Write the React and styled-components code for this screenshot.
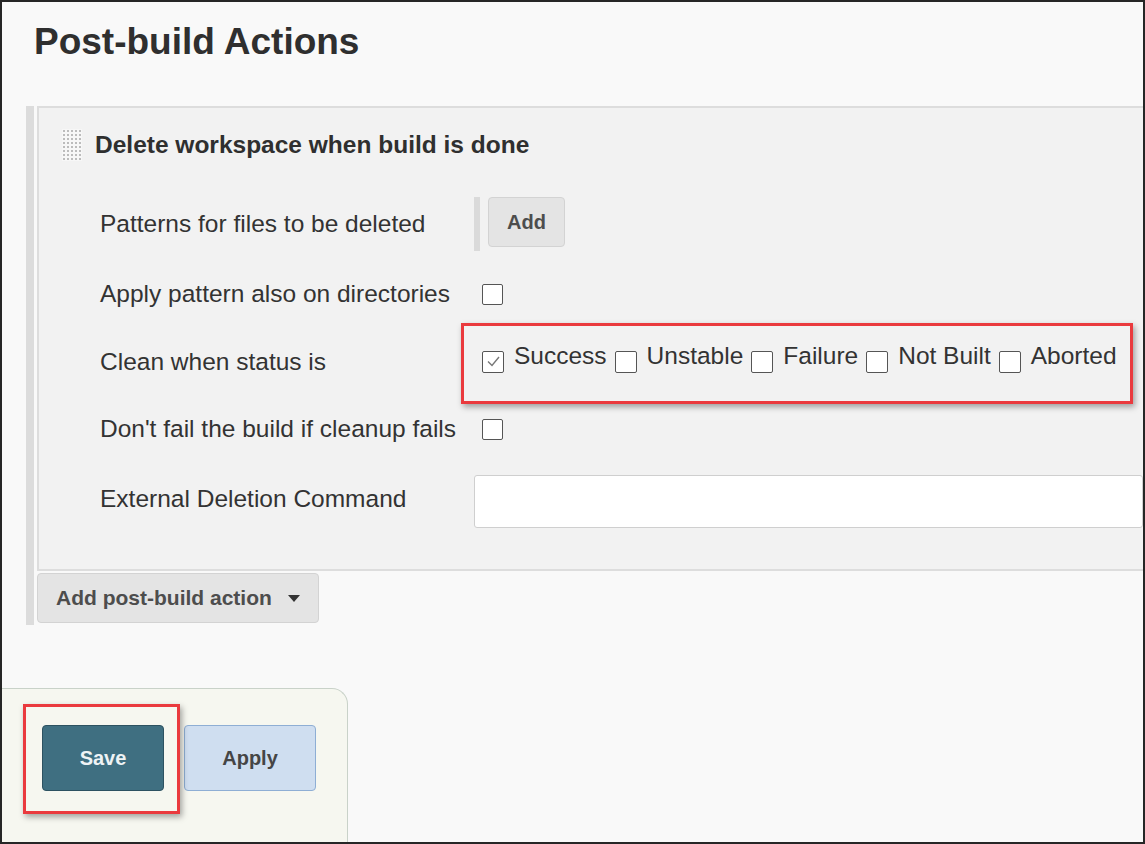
import React from "react";
import styled, { createGlobalStyle } from "styled-components";

const GlobalStyle = createGlobalStyle`
  * { box-sizing: border-box; }
  body {
    margin: 0;
    background: #ffffff;
    font-family: "Liberation Sans", Arial, sans-serif;
  }
`;

const FONT = `"Liberation Sans", Arial, sans-serif`;

const Frame = styled.div`
  width: 1145px;
  height: 844px;
  border: 2px solid #262626;
  background: #f9f9f9;
  overflow: hidden;
  display: flex;
  flex-direction: column;
  font-family: ${FONT};
  color: #333;
`;

const Title = styled.h1`
  margin: 19px 0 0 32px;
  font-size: 37px;
  line-height: 42px;
  font-weight: bold;
  color: #2f2f2f;
`;

const Section = styled.div`
  margin: 43px 0 0 24px;
  border-left: 8px solid #dcdcdc;
  padding: 0 0 2px 3px;
  display: flex;
  flex-direction: column;
  align-items: flex-start;
`;

const Panel = styled.div`
  align-self: stretch;
  background: #f2f2f2;
  border-top: 2px solid #dddddd;
  border-left: 2px solid #dddddd;
  border-bottom: 2px solid #dddddd;
  padding: 22px 0 34px 0;
`;

const PanelHeading = styled.div`
  display: flex;
  align-items: center;
  gap: 13px;
  padding-left: 23px;
  height: 30px;
  font-size: 24.5px;
  font-weight: bold;
  color: #2f2f2f;
`;

const Rows = styled.div`
  margin-top: 29px;
  padding-left: 61px;
  display: grid;
  grid-template-columns: 374px 1fr;
  grid-template-rows: 70px 70px 66px 68px 72px;
  align-items: center;
`;

const Label = styled.div`
  font-size: 24.5px;
  color: #333;
  white-space: nowrap;
`;

const Control = styled.div`
  display: flex;
  align-items: ${(p) => (p.$top ? "flex-start" : "center")};
  gap: ${(p) => p.$gap || 0}px;
  padding-left: ${(p) => p.$indent || 0}px;
`;

const RepeatBar = styled.div`
  width: 6px;
  height: 54px;
  background: #dadada;
`;

const GreyButton = styled.button`
  font-family: ${FONT};
  font-weight: bold;
  font-size: ${(p) => p.$size || 20}px;
  color: #4d4d4d;
  background: #e4e4e4;
  border: 1px solid #d3d3d3;
  border-radius: 4px;
  height: ${(p) => p.$h || 50}px;
  padding: 0 ${(p) => p.$pad || 18}px;
  display: inline-flex;
  align-items: center;
  gap: 16px;
`;

const Box = styled.span`
  display: inline-flex;
  align-items: center;
  justify-content: center;
  width: ${(p) => p.$s || 21}px;
  height: ${(p) => p.$s || 21}px;
  flex: none;
  background: #fff;
  border: 1.5px solid #555;
  border-radius: 2px;
  margin-top: ${(p) => p.$dy || 0}px;
`;

const StatusGroup = styled.div`
  position: relative;
  justify-self: start;
  display: flex;
  align-items: center;
  height: 40px;
  margin-bottom: 12px;
  padding-left: 8px;

  &::after {
    content: "";
    position: absolute;
    left: -13px;
    right: -16px;
    top: -13px;
    bottom: -28px;
    border: 3px solid #ea3a3e;
    box-shadow: 2px 3px 6px rgba(0, 0, 0, 0.35);
    pointer-events: none;
  }
`;

const StatusItem = styled.label`
  display: flex;
  align-items: center;
  margin-right: 8px;
  font-size: 24.5px;
  color: #333;
  white-space: nowrap;

  &:last-child {
    margin-right: 0;
  }

  span + span {
    margin-left: 10px;
  }
`;

const TextInput = styled.input`
  width: calc(100% + 20px);
  height: 53px;
  margin-top: 5px;
  background: #fff;
  border: 1px solid #cfcfcf;
  border-radius: 3px;
  outline: none;
`;

const AddActionWrap = styled.div`
  margin-top: 2px;
`;

const Footer = styled.div`
  margin-top: 63px;
  flex: 1;
  width: 346px;
  background: #f6f7f0;
  border-top: 1.5px solid #c9d2c9;
  border-right: 1.5px solid #c9d2c9;
  border-top-right-radius: 16px;
  padding: 36px 0 0 40px;
  display: flex;
  align-items: flex-start;
  gap: 20px;
`;

const Highlight = styled.div`
  position: relative;
  display: flex;

  &::after {
    content: "";
    position: absolute;
    left: -19px;
    right: -16px;
    top: -21px;
    bottom: -23px;
    border: 3.5px solid #ea3a3e;
    box-shadow: 2px 3px 6px rgba(0, 0, 0, 0.35);
    pointer-events: none;
  }
`;

const FormButton = styled.button`
  font-family: ${FONT};
  font-weight: bold;
  font-size: 20px;
  width: ${(p) => p.$w}px;
  height: 66px;
  border-radius: 4px;
  color: ${(p) => (p.$primary ? "#eef3f5" : "#454545")};
  background: ${(p) => (p.$primary ? "#3f6f81" : "#cfdef0")};
  border: 1.5px solid ${(p) => (p.$primary ? "#2d5261" : "#8eaed4")};
`;

const DragHandle = () => (
  <svg width="20" height="32" viewBox="0 0 20 32">
    <rect width="20" height="32" fill="#f7f7f7" />
    {Array.from({ length: 8 }).map((_, r) =>
      Array.from({ length: 5 }).map((_, c) => (
        <rect
          key={`${r}-${c}`}
          x={1 + c * 4}
          y={1 + r * 4}
          width="2"
          height="2"
          fill="#bcbcbc"
        />
      ))
    )}
  </svg>
);

const Caret = () => (
  <svg width="12" height="7" viewBox="0 0 12 7">
    <path d="M0 0 H12 L6 7 Z" fill="#333" />
  </svg>
);

const Check = () => (
  <svg width="15" height="13" viewBox="0 0 15 13">
    <path d="M2 6.5 L6 10.5 L13 2" fill="none" stroke="#777" strokeWidth="1.4" />
  </svg>
);

const statuses = [
  { name: "Success", checked: true },
  { name: "Unstable" },
  { name: "Failure" },
  { name: "Not Built" },
  { name: "Aborted" },
];

export default function App() {
  return (
    <>
      <GlobalStyle />
      <Frame>
        <Title>Post-build Actions</Title>
        <Section>
          <Panel>
            <PanelHeading>
              <DragHandle />
              Delete workspace when build is done
            </PanelHeading>
            <Rows>
              <Label>Patterns for files to be deleted</Label>
              <Control $top $gap={8}>
                <RepeatBar />
                <GreyButton $pad={18}>Add</GreyButton>
              </Control>

              <Label>Apply pattern also on directories</Label>
              <Control $indent={8}>
                <Box />
              </Control>

              <Label>Clean when status is</Label>
              <StatusGroup>
                {statuses.map((s) => (
                  <StatusItem key={s.name}>
                    <Box $s={22} $dy={11}>{s.checked && <Check />}</Box>
                    <span>{s.name}</span>
                  </StatusItem>
                ))}
              </StatusGroup>

              <Label>Don't fail the build if cleanup fails</Label>
              <Control $indent={8}>
                <Box />
              </Control>

              <Label>External Deletion Command</Label>
              <Control>
                <TextInput type="text" />
              </Control>
            </Rows>
          </Panel>
          <AddActionWrap>
            <GreyButton $size={21} $pad={18}>
              Add post-build action
              <Caret />
            </GreyButton>
          </AddActionWrap>
        </Section>
        <Footer>
          <Highlight>
            <FormButton $primary $w={122}>Save</FormButton>
          </Highlight>
          <FormButton $w={132}>Apply</FormButton>
        </Footer>
      </Frame>
    </>
  );
}
